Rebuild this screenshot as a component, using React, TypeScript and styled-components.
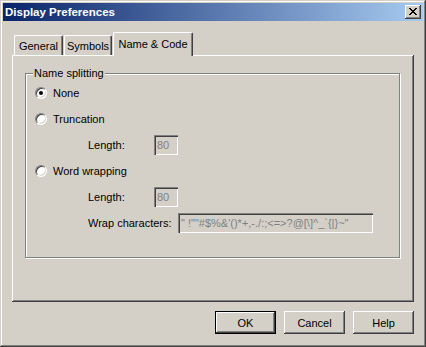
import React from "react";
import styled, { createGlobalStyle } from "styled-components";

const face = "#D4D0C8";
const font = `"Liberation Sans", Arial, sans-serif`;

const Global = createGlobalStyle`
  html, body { margin: 0; padding: 0; background: ${face}; }
  body { font-family: ${font}; font-size: 11px; color: #000; }
`;

const Window = styled.div`
  width: 426px;
  height: 347px;
  box-sizing: border-box;
  padding: 3px;
  background: ${face};
  box-shadow: inset -1px -1px #404040, inset 1px 1px ${face}, inset -2px -2px #808080, inset 2px 2px #fff;
  display: flex;
  flex-direction: column;
`;

const TitleBar = styled.div`
  height: 18px;
  flex: none;
  display: flex;
  align-items: center;
  justify-content: space-between;
  padding: 0 2px;
  background: linear-gradient(to right, #0a246a, #a6caf0);
`;

const Title = styled.span`
  color: #fff;
  font-weight: bold;
  font-size: 11.5px;
  line-height: 18px;
  white-space: nowrap;
`;

const CloseButton = styled.div`
  width: 16px;
  height: 14px;
  box-sizing: border-box;
  background: ${face};
  box-shadow: inset -1px -1px #404040, inset 1px 1px #fff, inset -2px -2px #808080, inset 2px 2px ${face};
  display: flex;
  align-items: center;
  justify-content: center;
  padding: 0 1px 1px 0;
`;

const Body = styled.div`
  flex: 1;
  display: flex;
  flex-direction: column;
  padding: 11px 9px 10px 9px;
  min-height: 0;
`;

const TabStrip = styled.div`
  display: flex;
  align-items: flex-end;
  height: 23px;
  padding-left: 2px;
  position: relative;
  z-index: 1;
  flex: none;
`;

const Tab = styled.div<{ $active?: boolean; $w: number; $gap?: number }>`
  width: ${(p) => p.$w}px;
  height: ${(p) => (p.$active ? 24 : 20)}px;
  margin-bottom: ${(p) => (p.$active ? -1 : 0)}px;
  margin-left: ${(p) => p.$gap ?? 0}px;
  box-sizing: border-box;
  background: ${face};
  border-top: 1px solid #fff;
  border-left: 1px solid #fff;
  border-right: 1px solid #404040;
  box-shadow: inset -1px 0 #808080;
  border-radius: 2px 2px 0 0;
  display: flex;
  align-items: center;
  justify-content: center;
  padding-bottom: ${(p) => (p.$active ? 2 : 0)}px;
  white-space: nowrap;
`;

const Panel = styled.div`
  flex: 1;
  display: flex;
  box-sizing: border-box;
  padding: 18px 14px 44px 13px;
  box-shadow: inset -1px -1px #404040, inset 1px 1px #fff, inset -2px -2px #808080;
`;

const GroupBox = styled.div`
  flex: 1;
  position: relative;
  border: 1px solid #808080;
  box-shadow: 1px 1px 0 #fff, inset 1px 1px 0 #fff;
  padding: 6px 0 0 9px;
  display: flex;
  flex-direction: column;
`;

const Legend = styled.span`
  position: absolute;
  top: -7px;
  left: 7px;
  padding: 0 1px;
  line-height: 13px;
  background: ${face};
  white-space: nowrap;
`;

const RadioRow = styled.label`
  height: 26px;
  display: flex;
  align-items: center;
  gap: 6px;
  white-space: nowrap;
`;

const RadioCircle = styled.span<{ $checked?: boolean }>`
  width: 12px;
  height: 12px;
  box-sizing: border-box;
  border-radius: 50%;
  background: #fff;
  border: 1px solid;
  border-color: #808080 #fff #fff #808080;
  box-shadow: inset 1px 1px #404040, inset -1px -1px ${face};
  position: relative;
  flex: none;
  &::after {
    content: "";
    display: ${(p) => (p.$checked ? "block" : "none")};
    position: absolute;
    width: 4px;
    height: 4px;
    border-radius: 50%;
    background: #000;
    left: 3px;
    top: 3px;
  }
`;

const FieldRow = styled.div`
  height: 26px;
  display: flex;
  align-items: center;
  padding-left: 53px;
`;

const FieldLabel = styled.span<{ $w: number }>`
  width: ${(p) => p.$w}px;
  flex: none;
  white-space: nowrap;
`;

const TextBox = styled.input<{ $w: number }>`
  width: ${(p) => p.$w}px;
  height: 20px;
  box-sizing: border-box;
  border: none;
  outline: none;
  margin: 0;
  padding: 0 2px 0 3px;
  font-family: ${font};
  font-size: 11px;
  color: #808080;
  -webkit-text-fill-color: #808080;
  opacity: 1;
  background: ${face};
  box-shadow: inset 1px 1px #808080, inset 2px 2px #404040, inset -1px -1px #fff, inset -2px -2px ${face};
`;

const ButtonRow = styled.div`
  display: flex;
  justify-content: flex-end;
  gap: 8px;
  margin-top: 9px;
  flex: none;
`;

const Button = styled.button<{ $default?: boolean }>`
  width: 61px;
  height: 23px;
  box-sizing: border-box;
  border: none;
  margin: 0;
  padding: 0;
  font-family: ${font};
  font-size: 11px;
  color: #000;
  background: ${face};
  box-shadow: ${(p) =>
    p.$default
      ? `inset 0 0 0 1px #000, inset -2px -2px #404040, inset 2px 2px #fff, inset -3px -3px #808080`
      : `inset -1px -1px #404040, inset 1px 1px #fff, inset -2px -2px #808080`};
`;

const CloseGlyph = () => (
  <svg width="8" height="7" viewBox="0 0 8 7" shapeRendering="crispEdges">
    <path
      fill="#000"
      d="M0 0h2v1H0z M6 0h2v1H6z M1 1h2v1H1z M5 1h2v1H5z M2 2h4v1H2z M3 3h2v1H3z M2 4h4v1H2z M1 5h2v1H1z M5 5h2v1H5z M0 6h2v1H0z M6 6h2v1H6z"
    />
  </svg>
);

export default function App() {
  const wrapChars = `" !""#$%&'()*+,-./:;<=>?@[\\]^_\`{|}~"`;
  return (
    <>
      <Global />
      <Window>
        <TitleBar>
          <Title>Display Preferences</Title>
          <CloseButton>
            <CloseGlyph />
          </CloseButton>
        </TitleBar>
        <Body>
          <TabStrip>
            <Tab $w={49}>General</Tab>
            <Tab $w={48} $gap={1}>Symbols</Tab>
            <Tab $w={80} $gap={1} $active>
              Name &amp; Code
            </Tab>
          </TabStrip>
          <Panel>
            <GroupBox>
              <Legend>Name splitting</Legend>
              <RadioRow>
                <RadioCircle $checked />
                None
              </RadioRow>
              <RadioRow>
                <RadioCircle />
                Truncation
              </RadioRow>
              <FieldRow>
                <FieldLabel $w={66}>Length:</FieldLabel>
                <TextBox $w={24} value="80" disabled readOnly />
              </FieldRow>
              <RadioRow>
                <RadioCircle />
                Word wrapping
              </RadioRow>
              <FieldRow>
                <FieldLabel $w={66}>Length:</FieldLabel>
                <TextBox $w={24} value="80" disabled readOnly />
              </FieldRow>
              <FieldRow>
                <FieldLabel $w={90}>Wrap characters:</FieldLabel>
                <TextBox $w={195} value={wrapChars} disabled readOnly />
              </FieldRow>
            </GroupBox>
          </Panel>
          <ButtonRow>
            <Button $default>OK</Button>
            <Button>Cancel</Button>
            <Button>Help</Button>
          </ButtonRow>
        </Body>
      </Window>
    </>
  );
}
